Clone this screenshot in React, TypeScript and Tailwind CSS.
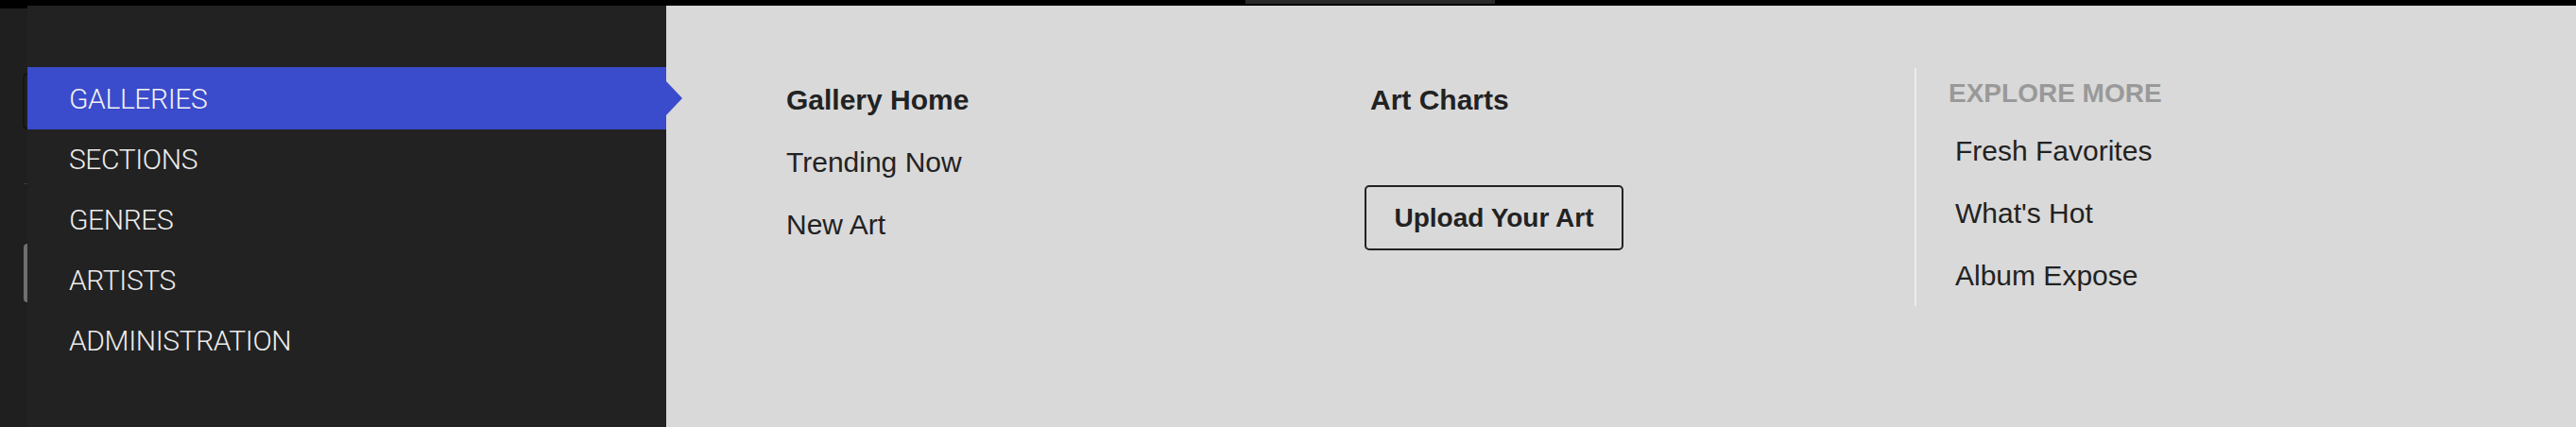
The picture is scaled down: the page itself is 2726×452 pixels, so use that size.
import * as React from "react";

const sections = ["GALLERIES", "SECTIONS", "GENRES", "ARTISTS", "ADMINISTRATION"];
const galleryLinks = ["Trending Now", "New Art"];
const exploreLinks = ["Fresh Favorites", "What's Hot", "Album Expose"];

export default function App() {
    const [active, setActive] = React.useState("GALLERIES");

    return (
        <div className="flex h-[452px] w-[2726px] overflow-hidden bg-black font-['Liberation_Sans',Arial,sans-serif]">
            {/* page behind the menu, peeking out on the left */}
            <div className="flex w-[29px] shrink-0 flex-col pt-[9px]">
                <div className="flex flex-1 flex-col items-end bg-[#1f1f1f]">
                    <div className="mt-[68px] h-[60px] w-[5px] rounded-l-[6px] border-y-2 border-l-2 border-[#141414]" />
                    <div className="mt-[57px] h-px w-[4px] bg-[#3a3a3a]" />
                    <div className="mt-[63px] h-[62px] w-[4px] rounded-l-[4px] bg-[#6f6f6f]" />
                </div>
            </div>

            <div className="flex flex-1 flex-col">
                <div className="h-[6px] shrink-0">
                    <div className="ml-[1289px] h-[4px] w-[264px] bg-[#2a2a2a]" />
                </div>

                <div className="flex flex-1">
                    <nav className="flex w-[676px] shrink-0 flex-col bg-[#222222] pt-[66px] font-['Roboto_Light','Roboto',sans-serif] font-light tracking-[-0.4px]">
                        {sections.map((s) =>
                            s === active ? (
                                <button
                                    key={s}
                                    onClick={() => setActive(s)}
                                    className="relative z-10 -my-px flex h-[66px] items-center bg-[#3a4bcb] pl-[44px] text-left text-[30px] text-[#f2f2f2]"
                                >
                                    {s}
                                    <span className="absolute left-full top-1/2 h-0 w-0 -translate-y-1/2 border-y-[18px] border-l-[17px] border-y-transparent border-l-[#3a4bcb]" />
                                </button>
                            ) : (
                                <button
                                    key={s}
                                    onClick={() => setActive(s)}
                                    className="flex h-16 items-center pl-[44px] text-left text-[30px] text-[#ededed]"
                                >
                                    {s}
                                </button>
                            )
                        )}
                    </nav>

                    <div className="flex flex-1 bg-[#d9d9d9] pl-[127px] pt-[82px] text-[#222222]">
                        <div className="flex w-[612px] shrink-0 flex-col items-start">
                            <a className="text-[30px] font-bold leading-[36px]">Gallery Home</a>
                            {galleryLinks.map((l) => (
                                <a key={l} className="mt-[30px] text-[30px] leading-[36px]">
                                    {l}
                                </a>
                            ))}
                        </div>

                        <div className="flex w-[582px] shrink-0 flex-col items-start">
                            <a className="pl-[6px] text-[30px] font-bold leading-[36px]">Art Charts</a>
                            <button className="mt-[72px] flex h-[69px] w-[274px] items-center justify-center rounded-[5px] border-2 border-[#222222] text-[28px] font-bold">
                                Upload Your Art
                            </button>
                        </div>

                        <div className="-mt-[16px] flex h-[252px] flex-col items-start self-start border-l-2 border-[#ececec] pl-[34px] pt-[11px]">
                            <h4 className="text-[28px] font-bold leading-[32px] text-[#999999]">EXPLORE MORE</h4>
                            {exploreLinks.map((l, i) => (
                                <a
                                    key={l}
                                    className={`pl-[7px] text-[30px] leading-[36px] ${i === 0 ? "mt-[27px]" : "mt-[30px]"}`}
                                >
                                    {l}
                                </a>
                            ))}
                        </div>
                    </div>
                </div>
            </div>
        </div>
    );
}
